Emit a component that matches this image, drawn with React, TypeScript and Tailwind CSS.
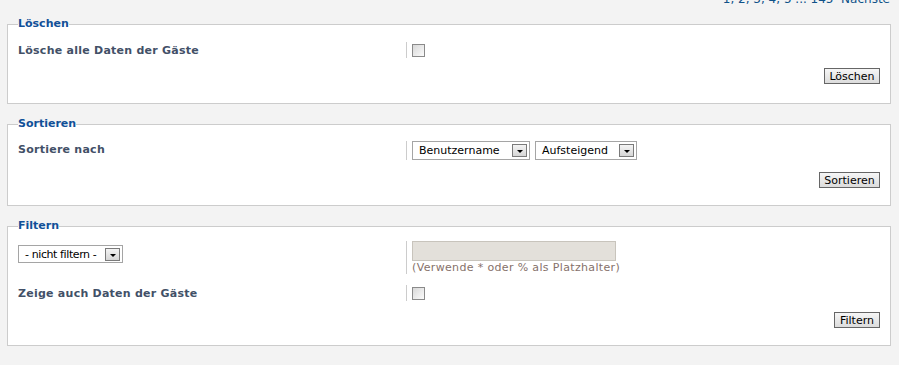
import React from "react";

const font = { fontFamily: '"DejaVu Sans", Verdana, sans-serif' };

function Checkbox() {
  return (
    <div className="w-[13px] h-[13px] border border-[#8a8a8a] bg-gradient-to-br from-[#d8d8d8] to-[#fbfbfb]" />
  );
}

function Select({ label, width, h = "h-[19px]", textClass = "" }: { label: string; width: string; h?: string; textClass?: string }) {
  return (
    <div className={`flex items-center justify-between border border-[#a5a5a5] bg-white pl-[6px] pr-[2px] ${h} ${width}`}>
      <span className={`text-[11px] text-black leading-none whitespace-nowrap ${textClass}`}>{label}</span>
      <div className="w-[15px] h-[13px] shrink-0 border border-[#7a7a7a] bg-gradient-to-b from-[#f4f4f4] to-[#d6d6d6] flex items-center justify-center">
        <div className="w-0 h-0 border-l-[3px] border-r-[3px] border-t-[3px] border-l-transparent border-r-transparent border-t-black mt-[2px]" />
      </div>
    </div>
  );
}

function Button({ label, width }: { label: string; width: string }) {
  return (
    <div className={`h-[16px] border border-[#666] bg-gradient-to-b from-[#f6f6f6] to-[#dcdcdc] flex items-center justify-center text-[11px] text-black leading-none ${width}`}>
      {label}
    </div>
  );
}

function Fieldset({ legend, children, pb }: { legend: string; children: React.ReactNode; pb: string }) {
  return (
    <fieldset className={`border border-[#cccccc] bg-white px-[10px] pt-[8px] ${pb}`}>
      <legend className="text-[11px] font-bold text-[#115098] leading-[14px]">{legend}</legend>
      {children}
    </fieldset>
  );
}

function Row({ label, left, children, className = "" }: { label?: string; left?: React.ReactNode; children: React.ReactNode; className?: string }) {
  return (
    <div className={`flex items-start ${className}`}>
      <div className="w-[388px] shrink-0 text-[11px] tracking-[0.25px] font-bold text-[#425067] leading-[16px] pt-[1px]">
        {label}
        {left}
      </div>
      <div className="border-l border-[#cccccc] pl-[5px] flex-1 flex flex-col">{children}</div>
    </div>
  );
}

export default function App() {
  return (
    <div className="w-[899px] h-[365px] bg-[#f3f3f3] overflow-hidden pl-[7px] pr-[8px]" style={font}>
      <div className="h-[5px] overflow-hidden flex justify-end">
        <div className="text-[12px] text-[#105289] leading-[14px] -mt-[8px] pr-[1px] whitespace-nowrap">
          1, 2, 3, 4, 5 ... 145&nbsp;&nbsp;Nächste
        </div>
      </div>
      <div className="flex flex-col gap-[13px] mt-[12px]">
        <Fieldset legend="Löschen" pb="pb-[19px]">
          <Row label="Lösche alle Daten der Gäste" className="mt-[3px]">
            <div className="h-[16px] flex items-center"><Checkbox /></div>
          </Row>
          <div className="flex justify-end mt-[9px]">
            <Button label="Löschen" width="w-[56px]" />
          </div>
        </Fieldset>

        <Fieldset legend="Sortieren" pb="pb-[17px]">
          <Row label="Sortiere nach" className="mt-[2px]">
            <div className="flex gap-[5px] h-[19px]">
              <Select label="Benutzername" width="w-[118px]" />
              <Select label="Aufsteigend" width="w-[102px]" />
            </div>
          </Row>
          <div className="flex justify-end mt-[12px]">
            <Button label="Sortieren" width="w-[61px]" />
          </div>
        </Fieldset>

        <Fieldset legend="Filtern" pb="pb-[17px]">
          <Row
            left={
              <div className="mt-[3px] font-normal tracking-normal">
                <Select label="- nicht filtern -" width="w-[105px]" h="h-[18px]" textClass="tracking-[-0.4px] text-[10.5px]" />
              </div>
            }
          >
            <div className="h-[20px] w-[204px] border border-[#c8c4bc] bg-[#e3e0da]" />
            <div className="text-[11px] tracking-[0.35px] text-[#86716a] leading-[13px]">(Verwende * oder % als Platzhalter)</div>
          </Row>
          <Row label="Zeige auch Daten der Gäste" className="mt-[11px]">
            <div className="h-[16px] flex items-center"><Checkbox /></div>
          </Row>
          <div className="flex justify-end mt-[10px]">
            <Button label="Filtern" width="w-[46px]" />
          </div>
        </Fieldset>
      </div>
    </div>
  );
}
